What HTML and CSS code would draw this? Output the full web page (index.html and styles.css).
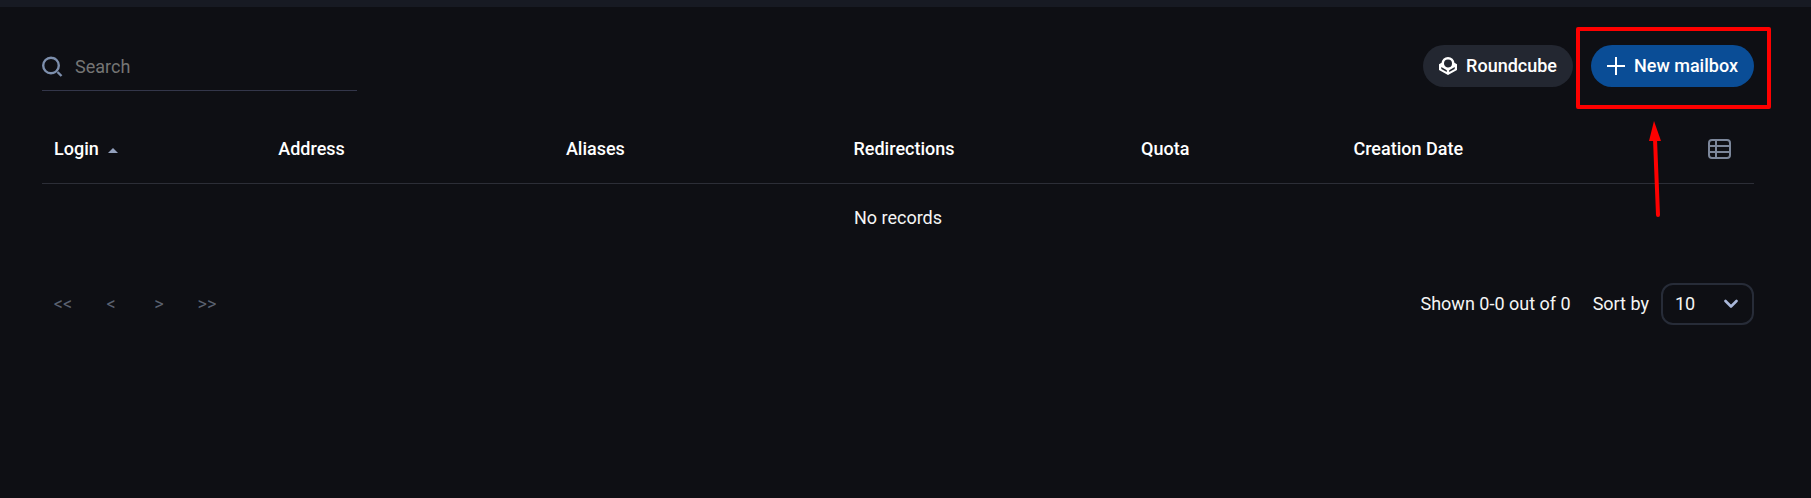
FILE: index.html
```html
<!DOCTYPE html>
<html lang="en">
<head>
    <meta charset="UTF-8">
    <meta name="viewport" content="width=device-width, initial-scale=1.0">
    <title>Mailboxes</title>
    <link rel="stylesheet" href="styles.css">
</head>
<body>

    <main class="panel">

        <!-- Search and actions -->
        <div class="toolbar">
            <label class="search">
                <svg class="search-icon" viewBox="0 0 21 21" aria-hidden="true">
                    <circle cx="9" cy="9.500" r="7.800"/>
                    <path d="M15.500 16L19.500 20"/>
                </svg>
                <input type="search" class="search-input" placeholder="Search" aria-label="Search">
            </label>

            <div class="actions">
                <button type="button" class="btn">
                    <svg class="btn-icon" viewBox="0 0 18 18" aria-hidden="true">
                        <circle class="cube-ball" cx="9" cy="6.400" r="5.200"/>
                        <path class="cube" d="M0 7.300L3 5.600L4.500 9L9 11.500L13.500 9L15 5.600L18 7.300V13L9 18L0 13Z"/>
                        <path class="cube-gap" d="M2.300 10L7.800 13.200V15L2.300 11.900ZM15.700 10L10.200 13.200V15L15.700 11.900Z"/>
                    </svg>
                    Roundcube
                </button>
                <div class="highlight">
                    <button type="button" class="btn btn-primary">
                        <svg class="btn-icon" viewBox="0 0 18 18" aria-hidden="true">
                            <path d="M9 0V18M0 9H18"/>
                        </svg>
                        New mailbox
                    </button>
                    <svg class="arrow" viewBox="0 0 14 98" aria-hidden="true">
                        <path class="arrow-line" d="M6 18L9 94"/>
                        <path class="arrow-head" d="M5 0L12 20L0 20Z"/>
                    </svg>
                </div>
            </div>
        </div>

        <!-- Mailbox list -->
        <table class="mailboxes">
            <thead>
                <tr>
                    <th class="col-login">Login <span class="sort-asc"></span></th>
                    <th class="col-wide">Address</th>
                    <th class="col-wide">Aliases</th>
                    <th class="col-wide">Redirections</th>
                    <th class="col-quota">Quota</th>
                    <th>Creation Date</th>
                    <th class="col-settings">
                        <button type="button" class="columns-btn" aria-label="Columns">
                            <svg viewBox="0 0 23 20" aria-hidden="true">
                                <rect x="1" y="1" width="21" height="18" rx="3"/>
                                <path d="M8 1V19M1 7H22M1 13H22"/>
                            </svg>
                        </button>
                    </th>
                </tr>
            </thead>
            <tbody>
                <tr>
                    <td class="empty" colspan="7">No records</td>
                </tr>
            </tbody>
        </table>

        <!-- Pagination -->
        <div class="footer">
            <nav class="pager">
                <button type="button" class="page-btn" disabled>&lt;&lt;</button>
                <button type="button" class="page-btn" disabled>&lt;</button>
                <button type="button" class="page-btn" disabled>&gt;</button>
                <button type="button" class="page-btn" disabled>&gt;&gt;</button>
            </nav>
            <div class="page-info">
                <span class="shown">Shown 0-0 out of 0</span>
                <label for="per-page">Sort by</label>
                <div class="select-box">
                    <select id="per-page" class="per-page">
                        <option>10</option>
                        <option>25</option>
                        <option>50</option>
                    </select>
                    <svg class="chevron" viewBox="0 0 14 10" aria-hidden="true">
                        <path d="M1.500 2L7 7.500L12.500 2"/>
                    </svg>
                </div>
            </div>
        </div>

    </main>

</body>
</html>
```

FILE: styles.css
```css
* {
    box-sizing: border-box;
}

body {
    margin: 0;
    min-height: 100vh;
    background-color: #0e0f14;
    border-top: 7px solid #171a23;
    color: #f5f5f5;
    font-family: Roboto, sans-serif;
    font-size: 18px;
    line-height: 24px;
}

button,
input,
select {
    font: inherit;
    color: inherit;
    background: none;
    border: none;
    padding: 0;
    margin: 0;
}

svg {
    display: block;
    fill: none;
}

.panel {
    padding: 38px 57px 38px 42px;
}

/* Search and actions */
.toolbar {
    display: flex;
    justify-content: space-between;
    align-items: flex-start;
}

.search {
    display: flex;
    align-items: center;
    gap: 12px;
    width: 315px;
    height: 46px;
    padding-bottom: 2px;
    border-bottom: 1px solid #33364a;
}

.search-icon {
    width: 21px;
    height: 21px;
    stroke: #7d8fad;
    stroke-width: 2.4;
}

.search-input {
    flex: 1;
    min-width: 0;
    outline: none;
}

.search-input::placeholder {
    color: #757575;
}

.actions {
    display: flex;
    gap: 18px;
}

.btn {
    display: flex;
    align-items: center;
    gap: 9px;
    height: 42px;
    padding: 0 16px;
    border-radius: 21px;
    background-color: #232731;
    color: white;
    font-weight: 500;
    cursor: pointer;
}

.btn-primary {
    background-color: #0a4d96;
}

.btn-icon {
    width: 18px;
    height: 18px;
    stroke: white;
    stroke-width: 2;
}

.cube-ball {
    stroke-width: 2.4;
}

.cube {
    fill: white;
    stroke: none;
}

.cube-gap {
    fill: #232731;
    stroke: none;
}

/* Red frame and arrow over the button */
.highlight {
    position: relative;
}

.highlight::before {
    content: "";
    position: absolute;
    inset: -18px -17px -22px -15px;
    border: 4px solid #fe0000;
    border-radius: 2px;
    pointer-events: none;
}

.arrow {
    position: absolute;
    top: 76px;
    right: 91px;
    width: 14px;
    height: 98px;
    pointer-events: none;
}

.arrow-line {
    stroke: #fe0000;
    stroke-width: 4;
    stroke-linecap: round;
}

.arrow-head {
    fill: #fe0000;
}

/* Mailbox list */
.mailboxes {
    width: 100%;
    margin-top: 24px;
    table-layout: fixed;
    border-collapse: collapse;
}

.mailboxes th {
    height: 68px;
    padding: 0 12px;
    border-bottom: 1px solid #2c2e37;
    color: white;
    font-weight: 500;
    text-align: left;
}

.mailboxes .col-login {
    width: 13.1%;
}

.mailboxes .col-wide {
    width: 16.8%;
}

.mailboxes .col-quota {
    width: 12.4%;
}

.mailboxes .col-settings {
    width: 70px;
    padding: 0 23px 0 24px;
}

.sort-asc {
    display: inline-block;
    margin-left: 5px;
    border: 5px solid transparent;
    border-top: none;
    border-bottom-color: #93a1bd;
    vertical-align: 2px;
}

.columns-btn {
    display: block;
    width: 23px;
    cursor: pointer;
}

.columns-btn svg {
    stroke: #7c879b;
    stroke-width: 2;
}

.mailboxes .empty {
    height: 68px;
    padding: 1px 0 0;
    text-align: center;
}

/* Pagination */
.footer {
    display: flex;
    justify-content: space-between;
    align-items: center;
    margin-top: 32px;
}

.pager {
    display: flex;
    gap: 6px;
}

.page-btn {
    width: 42px;
    height: 42px;
    color: #5a6170;
}

.page-info {
    display: flex;
    align-items: center;
}

.shown {
    margin-right: 22px;
}

.select-box {
    position: relative;
    margin-left: 12px;
}

.per-page {
    display: block;
    width: 93px;
    height: 42px;
    padding: 0 12px;
    border: 2px solid #272c38;
    border-radius: 12px;
    appearance: none;
}

.per-page option {
    background-color: #0e0f14;
}

.chevron {
    position: absolute;
    top: 16px;
    right: 16px;
    width: 14px;
    height: 10px;
    stroke: #a9b7d9;
    stroke-width: 2.6;
    stroke-linecap: round;
    stroke-linejoin: round;
    pointer-events: none;
}
```
